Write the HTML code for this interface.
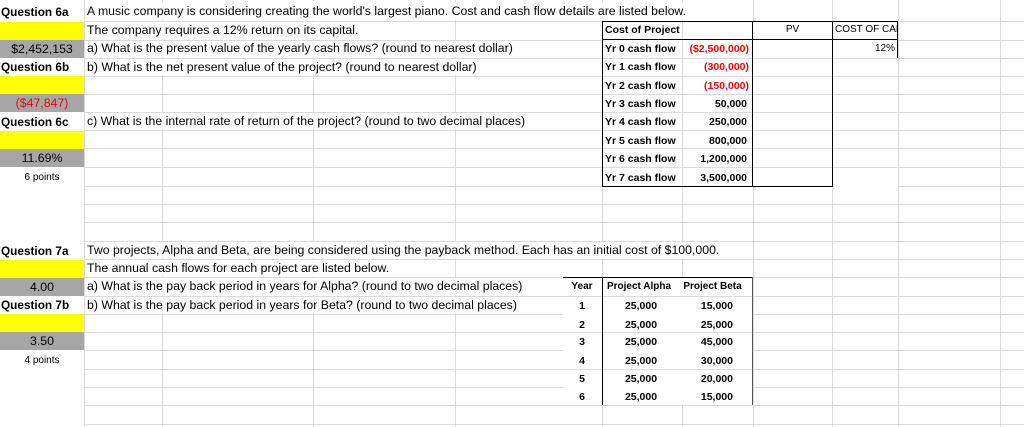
<!DOCTYPE html>
<html><head><meta charset="utf-8"><style>
*{margin:0;padding:0;box-sizing:border-box}
body{width:1024px;height:427px;background:#fff;position:relative;overflow:hidden;font-family:"Liberation Sans",Arial,sans-serif;font-size:12.3px;color:#000}
.h{position:absolute;left:0;width:1024px;height:1px;background:#dadada}
.v{position:absolute;width:1px;background:#dadada}
.t{position:absolute;white-space:nowrap;line-height:18px;height:18px}
.q{font-size:11.8px;font-weight:bold}
.b{font-weight:bold}
.y{position:absolute;left:0;width:84px;height:18px;background:#ffff00}
.g{position:absolute;left:0;width:84px;height:18px;background:#a6a6a6;text-align:center;line-height:18px}
.k{position:absolute;background:#000}
.sm{font-size:10.5px;font-weight:bold}
.r{color:#ff0000}
</style></head><body>
<div class="h" style="top:21px"></div><div class="h" style="top:40px"></div><div class="h" style="top:58px"></div><div class="h" style="top:76px"></div><div class="h" style="top:94px"></div><div class="h" style="top:112px"></div><div class="h" style="top:130px"></div><div class="h" style="top:148px"></div><div class="h" style="top:167px"></div><div class="h" style="top:186px"></div><div class="h" style="top:204px"></div><div class="h" style="top:222px"></div><div class="h" style="top:241px"></div><div class="h" style="top:259px"></div><div class="h" style="top:277px"></div><div class="h" style="top:296px"></div><div class="h" style="top:314px"></div><div class="h" style="top:332px"></div><div class="h" style="top:350px"></div><div class="h" style="top:369px"></div><div class="h" style="top:387px"></div><div class="h" style="top:405px"></div><div class="h" style="top:424px"></div>
<div class="v" style="left:84px;top:0;height:427px"></div>
<div class="v" style="left:162px;top:0;height:427px"></div>
<div class="v" style="left:313px;top:0;height:427px"></div>
<div class="v" style="left:455px;top:0;height:427px"></div>
<div class="v" style="left:602px;top:0;height:427px"></div>
<div class="v" style="left:682px;top:0;height:427px"></div>
<div class="v" style="left:753px;top:0;height:427px"></div>
<div class="v" style="left:832px;top:0;height:427px"></div>
<div class="v" style="left:898px;top:0;height:427px"></div>
<div class="v" style="left:1000px;top:0;height:427px"></div>
<div style="position:absolute;left:85px;top:2px;width:610px;height:18px;background:#fff"></div>
<div style="position:absolute;left:85px;top:22px;width:270px;height:17px;background:#fff"></div>
<div style="position:absolute;left:85px;top:41px;width:435px;height:16px;background:#fff"></div>
<div style="position:absolute;left:85px;top:59px;width:405px;height:16px;background:#fff"></div>
<div style="position:absolute;left:85px;top:113px;width:455px;height:16px;background:#fff"></div>
<div style="position:absolute;left:85px;top:242px;width:635px;height:16px;background:#fff"></div>
<div style="position:absolute;left:85px;top:260px;width:310px;height:16px;background:#fff"></div>
<div style="position:absolute;left:85px;top:278px;width:445px;height:17px;background:#fff"></div>
<div style="position:absolute;left:85px;top:297px;width:440px;height:16px;background:#fff"></div>
<div style="position:absolute;left:0;top:0;width:84px;height:427px;background:#fff"></div>
<div class="t q" style="left:1px;top:3px">Question 6a</div>
<div class="y" style="top:22px"></div>
<div class="g" style="top:40px">$2,452,153</div>
<div class="t q" style="left:1px;top:58px">Question 6b</div>
<div class="y" style="top:76px"></div>
<div class="g r" style="top:94px">($47,847)</div>
<div class="t q" style="left:1px;top:113px">Question 6c</div>
<div class="y" style="top:131px"></div>
<div class="g" style="top:149px">11.69%</div>
<div class="t" style="left:0;width:84px;text-align:center;top:169px;font-size:10px">6 points</div>
<div class="t q" style="left:1px;top:242px">Question 7a</div>
<div class="y" style="top:260px"></div>
<div class="g" style="top:278px">4.00</div>
<div class="t q" style="left:1px;top:296px">Question 7b</div>
<div class="y" style="top:314px"></div>
<div class="g" style="top:332px">3.50</div>
<div class="t" style="left:0;width:84px;text-align:center;top:352px;font-size:10px">4 points</div>
<div class="t" style="left:87px;top:2px">A music company is considering creating the world's largest piano. Cost and cash flow details are listed below.</div>
<div class="t" style="left:87px;top:21px">The company requires a 12% return on its capital.</div>
<div class="t" style="left:87px;top:39px">a) What is the present value of the yearly cash flows? (round to nearest dollar)</div>
<div class="t" style="left:87px;top:58px">b) What is the net present value of the project? (round to nearest dollar)</div>
<div class="t" style="left:87px;top:112px">c) What is the internal rate of return of the project? (round to two decimal places)</div>
<div class="t" style="left:87px;top:241px">Two projects, Alpha and Beta, are being considered using the payback method. Each has an initial cost of $100,000.</div>
<div class="t" style="left:87px;top:259px">The annual cash flows for each project are listed below.</div>
<div class="t" style="left:87px;top:277px">a) What is the pay back period in years for Alpha? (round to two decimal places)</div>
<div class="t" style="left:87px;top:296px">b) What is the pay back period in years for Beta? (round to two decimal places)</div>
<div style="position:absolute;left:603px;top:21px;width:150px;height:166px;background:#fff"></div>
<div style="position:absolute;left:753px;top:21px;width:145px;height:166px;background:#fff"></div>
<div class="v" style="left:682px;top:21px;height:166px"></div>
<div class="h" style="left:603px;width:295px;top:58px"></div><div class="h" style="left:603px;width:295px;top:76px"></div><div class="h" style="left:603px;width:295px;top:94px"></div><div class="h" style="left:603px;width:295px;top:112px"></div><div class="h" style="left:603px;width:295px;top:130px"></div><div class="h" style="left:603px;width:295px;top:148px"></div><div class="h" style="left:603px;width:295px;top:167px"></div>
<div class="k" style="left:603px;top:21px;width:295px;height:1px"></div>
<div class="k" style="left:603px;top:39px;width:295px;height:1px"></div>
<div class="k" style="left:602px;top:21px;width:1px;height:166px"></div>
<div class="k" style="left:752px;top:21px;width:1px;height:166px"></div>
<div class="k" style="left:832px;top:21px;width:1px;height:166px"></div>
<div class="k" style="left:897px;top:21px;width:1px;height:37px"></div>
<div class="k" style="left:603px;top:186px;width:230px;height:1px"></div>
<div class="t sm" style="left:605px;top:21px">Cost of Project</div>
<div class="t" style="left:753px;width:79px;text-align:center;top:21px;font-size:10px">PV</div>
<div class="t" style="left:835px;top:21px;font-size:10px;width:62px;overflow:hidden">COST OF CAP</div>
<div class="t" style="left:835px;width:60px;text-align:right;top:40px;font-size:10px">12%</div>
<div class="t sm" style="left:605px;top:40px">Yr 0 cash flow</div><div class="t sm r" style="left:683px;width:66px;text-align:right;top:40px">($2,500,000)</div>
<div class="t sm" style="left:605px;top:58px">Yr 1 cash flow</div><div class="t sm r" style="left:683px;width:66px;text-align:right;top:58px">(300,000)</div>
<div class="t sm" style="left:605px;top:77px">Yr 2 cash flow</div><div class="t sm r" style="left:683px;width:66px;text-align:right;top:77px">(150,000)</div>
<div class="t sm" style="left:605px;top:95px">Yr 3 cash flow</div><div class="t sm" style="left:683px;width:64px;text-align:right;top:95px">50,000</div>
<div class="t sm" style="left:605px;top:113px">Yr 4 cash flow</div><div class="t sm" style="left:683px;width:64px;text-align:right;top:113px">250,000</div>
<div class="t sm" style="left:605px;top:132px">Yr 5 cash flow</div><div class="t sm" style="left:683px;width:64px;text-align:right;top:132px">800,000</div>
<div class="t sm" style="left:605px;top:150px">Yr 6 cash flow</div><div class="t sm" style="left:683px;width:64px;text-align:right;top:150px">1,200,000</div>
<div class="t sm" style="left:605px;top:169px">Yr 7 cash flow</div><div class="t sm" style="left:683px;width:64px;text-align:right;top:169px">3,500,000</div>
<div style="position:absolute;left:563px;top:278px;width:189px;height:127px;background:#fff"></div>
<div class="h" style="left:563px;width:189px;top:296px"></div><div class="h" style="left:563px;width:189px;top:332px"></div><div class="h" style="left:563px;width:189px;top:369px"></div>
<div class="k" style="left:563px;top:277px;width:190px;height:1px"></div>
<div class="k" style="left:602px;top:277px;width:1px;height:128px"></div>
<div class="k" style="left:752px;top:277px;width:1px;height:128px;background:#555"></div>
<div class="t sm" style="left:563px;width:38px;text-align:center;top:278px;font-size:10px">Year</div>
<div class="t sm" style="left:603px;width:72px;text-align:center;top:278px;font-size:10px">Project Alpha</div>
<div class="t sm" style="left:676px;width:73px;text-align:center;top:278px;font-size:10px">Project Beta</div>
<div class="t sm" style="left:563px;width:38px;text-align:center;top:297px">1</div><div class="t sm" style="left:603px;width:76px;text-align:center;top:297px">25,000</div><div class="t sm" style="left:676px;width:57px;text-align:right;top:297px">15,000</div>
<div class="t sm" style="left:563px;width:38px;text-align:center;top:316px">2</div><div class="t sm" style="left:603px;width:76px;text-align:center;top:316px">25,000</div><div class="t sm" style="left:676px;width:57px;text-align:right;top:316px">25,000</div>
<div class="t sm" style="left:563px;width:38px;text-align:center;top:333px">3</div><div class="t sm" style="left:603px;width:76px;text-align:center;top:333px">25,000</div><div class="t sm" style="left:676px;width:57px;text-align:right;top:333px">45,000</div>
<div class="t sm" style="left:563px;width:38px;text-align:center;top:352px">4</div><div class="t sm" style="left:603px;width:76px;text-align:center;top:352px">25,000</div><div class="t sm" style="left:676px;width:57px;text-align:right;top:352px">30,000</div>
<div class="t sm" style="left:563px;width:38px;text-align:center;top:370px">5</div><div class="t sm" style="left:603px;width:76px;text-align:center;top:370px">25,000</div><div class="t sm" style="left:676px;width:57px;text-align:right;top:370px">20,000</div>
<div class="t sm" style="left:563px;width:38px;text-align:center;top:388px">6</div><div class="t sm" style="left:603px;width:76px;text-align:center;top:388px">25,000</div><div class="t sm" style="left:676px;width:57px;text-align:right;top:388px">15,000</div>
</body></html>
